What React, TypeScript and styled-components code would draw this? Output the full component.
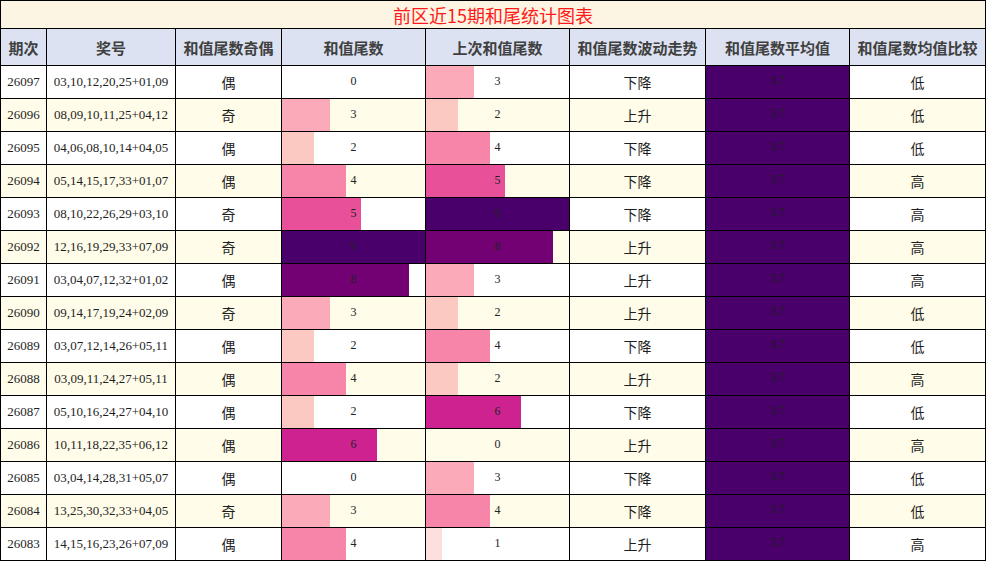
import React from "react";
import styled, { createGlobalStyle, css } from "styled-components";

const GlobalStyle = createGlobalStyle`
  html, body { margin: 0; padding: 0; background: #ffffff; }
  * { box-sizing: border-box; }
`;

type Row = {
  issue: string;
  nums: string;
  parity: string;
  tail: number;
  prev: number;
  trend: string;
  cmp: string;
};

const rows: Row[] = [
  { issue: "26097", nums: "03,10,12,20,25+01,09", parity: "偶", tail: 0, prev: 3, trend: "下降", cmp: "低" },
  { issue: "26096", nums: "08,09,10,11,25+04,12", parity: "奇", tail: 3, prev: 2, trend: "上升", cmp: "低" },
  { issue: "26095", nums: "04,06,08,10,14+04,05", parity: "偶", tail: 2, prev: 4, trend: "下降", cmp: "低" },
  { issue: "26094", nums: "05,14,15,17,33+01,07", parity: "偶", tail: 4, prev: 5, trend: "下降", cmp: "高" },
  { issue: "26093", nums: "08,10,22,26,29+03,10", parity: "奇", tail: 5, prev: 9, trend: "下降", cmp: "高" },
  { issue: "26092", nums: "12,16,19,29,33+07,09", parity: "奇", tail: 9, prev: 8, trend: "上升", cmp: "高" },
  { issue: "26091", nums: "03,04,07,12,32+01,02", parity: "偶", tail: 8, prev: 3, trend: "上升", cmp: "高" },
  { issue: "26090", nums: "09,14,17,19,24+02,09", parity: "奇", tail: 3, prev: 2, trend: "上升", cmp: "低" },
  { issue: "26089", nums: "03,07,12,14,26+05,11", parity: "偶", tail: 2, prev: 4, trend: "下降", cmp: "低" },
  { issue: "26088", nums: "03,09,11,24,27+05,11", parity: "偶", tail: 4, prev: 2, trend: "上升", cmp: "高" },
  { issue: "26087", nums: "05,10,16,24,27+04,10", parity: "偶", tail: 2, prev: 6, trend: "下降", cmp: "低" },
  { issue: "26086", nums: "10,11,18,22,35+06,12", parity: "偶", tail: 6, prev: 0, trend: "上升", cmp: "高" },
  { issue: "26085", nums: "03,04,14,28,31+05,07", parity: "偶", tail: 0, prev: 3, trend: "下降", cmp: "低" },
  { issue: "26084", nums: "13,25,30,32,33+04,05", parity: "奇", tail: 3, prev: 4, trend: "下降", cmp: "低" },
  { issue: "26083", nums: "14,15,16,23,26+07,09", parity: "偶", tail: 4, prev: 1, trend: "上升", cmp: "高" },
];

const barColors: Record<number, string> = {
  0: "transparent",
  1: "#fde0dd",
  2: "#fcc8c2",
  3: "#faaab8",
  4: "#f784a9",
  5: "#e8519a",
  6: "#cd2290",
  7: "#a0037c",
  8: "#740174",
  9: "#49006a",
};

const headers = [
  "期次",
  "奖号",
  "和值尾数奇偶",
  "和值尾数",
  "上次和值尾数",
  "和值尾数波动走势",
  "和值尾数平均值",
  "和值尾数均值比较",
];

const Table = styled.div`
  width: 986px;
  display: grid;
  grid-template-columns: 46px 129px 106px 144px 144px 136px 144px 136px;
  grid-template-rows: 28px 37px repeat(15, 33px);
  border-left: 1px solid #000;
  border-top: 1px solid #000;
`;

const Title = styled.div`
  grid-column: 1 / -1;
  background: #fdf5e4;
  border-right: 1px solid #000;
  border-bottom: 1px solid #000;
  display: flex;
  align-items: center;
  justify-content: center;
  color: #ff1a1a;
  font-family: "Noto Sans CJK SC", "Noto Sans", sans-serif;
  font-size: 18px;
  line-height: 1;
  padding-top: 1px;
`;

const baseCell = css`
  border-right: 1px solid #000;
  border-bottom: 1px solid #000;
  display: flex;
  align-items: center;
  justify-content: center;
  white-space: nowrap;
  overflow: hidden;
`;

const HeadCell = styled.div`
  ${baseCell};
  background: #dce2f1;
  color: #404040;
  font-family: "Noto Sans CJK SC", "Noto Sans", sans-serif;
  font-weight: 700;
  font-size: 15px;
`;

const Cell = styled.div<{ $alt: boolean; $cjk?: boolean }>`
  ${baseCell};
  background: ${(p) => (p.$alt ? "#fffce9" : "#ffffff")};
  color: #1e1e1e;
  font-family: ${(p) =>
    p.$cjk
      ? `"Noto Sans CJK SC", "Noto Sans", sans-serif`
      : `"Liberation Serif", "Times New Roman", serif`};
  font-size: ${(p) => (p.$cjk ? "14px" : "13px")};
`;

const BarCell = styled.div<{ $alt: boolean; $value: number }>`
  ${baseCell};
  background-color: ${(p) => (p.$alt ? "#fffce9" : "#ffffff")};
  background-image: linear-gradient(
    to right,
    ${(p) => barColors[p.$value]} 0,
    ${(p) => barColors[p.$value]} ${(p) => ((p.$value / 9) * 100).toFixed(3)}%,
    transparent ${(p) => ((p.$value / 9) * 100).toFixed(3)}%
  );
  color: #222222;
  font-family: "Liberation Serif", "Times New Roman", serif;
  font-size: 12px;
  padding-bottom: 2px;
`;

const AvgCell = styled.div`
  ${baseCell};
  background: #49006a;
  color: #1e1e1e;
  font-family: "Liberation Serif", "Times New Roman", serif;
  font-size: 12px;
  padding-bottom: 3px;
`;

export default function App() {
  return (
    <>
      <GlobalStyle />
      <Table>
        <Title>前区近15期和尾统计图表</Title>
        {headers.map((h) => (
          <HeadCell key={h}>{h}</HeadCell>
        ))}
        {rows.map((r, i) => {
          const alt = i % 2 === 1;
          return (
            <React.Fragment key={r.issue}>
              <Cell $alt={alt}>{r.issue}</Cell>
              <Cell $alt={alt}>{r.nums}</Cell>
              <Cell $alt={alt} $cjk>
                {r.parity}
              </Cell>
              <BarCell $alt={alt} $value={r.tail}>
                {r.tail}
              </BarCell>
              <BarCell $alt={alt} $value={r.prev}>
                {r.prev}
              </BarCell>
              <Cell $alt={alt} $cjk>
                {r.trend}
              </Cell>
              <AvgCell>3.7</AvgCell>
              <Cell $alt={alt} $cjk>
                {r.cmp}
              </Cell>
            </React.Fragment>
          );
        })}
      </Table>
    </>
  );
}
